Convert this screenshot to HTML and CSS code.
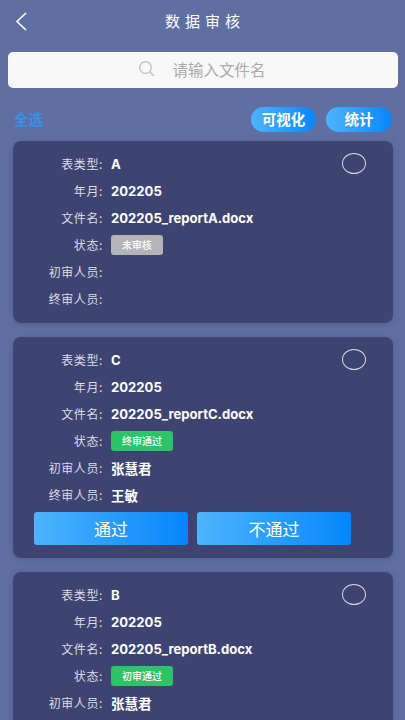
FILE: index.html
```html
<!DOCTYPE html>
<html lang="zh-CN">
<head>
  <meta charset="UTF-8">
  <meta name="viewport" content="width=device-width, initial-scale=1.0">
  <title>数据审核</title>
  <link rel="stylesheet" href="styles.css">
</head>
<body>

<header class="top-bar">
  <svg class="back-icon" width="14" height="20" viewBox="0 0 14 20">
    <path d="M12 2 L3 10.5 L12 19" fill="none" stroke="#fff" stroke-width="1.6"/>
  </svg>
  <h1>数据审核</h1>
</header>

<div class="search-box">
  <svg class="search-icon" width="18" height="18" viewBox="0 0 18 18">
    <circle cx="7.5" cy="7.5" r="5.8" fill="none" stroke="#bdbdbd" stroke-width="1.3"/>
    <path d="M12 12 L16 16" stroke="#bdbdbd" stroke-width="1.3"/>
  </svg>
  <span>请输入文件名</span>
</div>

<div class="toolbar">
  <span class="select-all">全选</span>
  <div class="pills">
    <button class="pill pill-wide">可视化</button>
    <button class="pill">统计</button>
  </div>
</div>

<div class="card">
  <div class="radio"></div>
  <div class="row"><label>表类型:</label><b>A</b></div>
  <div class="row"><label>年月:</label><b>202205</b></div>
  <div class="row"><label>文件名:</label><b>202205_reportA.docx</b></div>
  <div class="row"><label>状态:</label><span class="badge grey">未审核</span></div>
  <div class="row"><label>初审人员:</label></div>
  <div class="row"><label>终审人员:</label></div>
</div>

<div class="card">
  <div class="radio"></div>
  <div class="row"><label>表类型:</label><b>C</b></div>
  <div class="row"><label>年月:</label><b>202205</b></div>
  <div class="row"><label>文件名:</label><b>202205_reportC.docx</b></div>
  <div class="row"><label>状态:</label><span class="badge green">终审通过</span></div>
  <div class="row"><label>初审人员:</label><b class="name">张慧君</b></div>
  <div class="row"><label>终审人员:</label><b class="name">王敏</b></div>
  <div class="actions">
    <button>通过</button>
    <button>不通过</button>
  </div>
</div>

<div class="card">
  <div class="radio"></div>
  <div class="row"><label>表类型:</label><b>B</b></div>
  <div class="row"><label>年月:</label><b>202205</b></div>
  <div class="row"><label>文件名:</label><b>202205_reportB.docx</b></div>
  <div class="row"><label>状态:</label><span class="badge green">初审通过</span></div>
  <div class="row"><label>初审人员:</label><b class="name">张慧君</b></div>
</div>

</body>
</html>
```

FILE: styles.css
```css
* {
  margin: 0;
  padding: 0;
  box-sizing: border-box;
  font-family: "Noto Sans CJK SC", sans-serif;
}

html, body {
  height: 720px;
  overflow: hidden;
}

body {
  background: #5f6fa1;
  color: #fff;
}

.top-bar {
  height: 42px;
  padding: 11px 0 0 14px;
  position: relative;
}

.back-icon {
  display: block;
}

.top-bar h1 {
  position: absolute;
  top: 10px;
  left: 0;
  right: 0;
  text-align: center;
  font-size: 15px;
  line-height: 22px;
  font-weight: 400;
  letter-spacing: 5px;
  text-indent: 5px;
}

.search-box {
  margin: 10px 7px 0 8px;
  height: 36px;
  padding: 0 2px 2px 0;
  background: #f8f8f8;
  border-radius: 5px;
  display: flex;
  align-items: center;
  justify-content: center;
  gap: 16px;
  color: #a9a9a9;
  font-size: 15.5px;
}

.toolbar {
  margin-top: 18px;
  height: 26px;
  padding: 0 13px 0 14px;
  display: flex;
  align-items: center;
  justify-content: space-between;
}

.select-all {
  margin-top: -2px;
  color: #3094ec;
  font-size: 14.5px;
  font-weight: 700;
}

.pills {
  display: flex;
  gap: 10px;
}

.pill {
  width: 66px;
  height: 25px;
  padding-bottom: 2px;
  border: none;
  border-radius: 13px;
  background: linear-gradient(to right, #4db4fd, #0a86fb);
  color: #fff;
  font-size: 14.5px;
  font-weight: 700;
}

.pill-wide {
  width: 65px;
}

.card {
  position: relative;
  margin: 9px 12px 14px 13px;
  padding: 9px 0 11px;
  background: #3e4472;
  border-radius: 8px;
  box-shadow: 0 1px 6px rgba(50, 60, 110, 0.3);
}

.card + .card {
  margin-top: 14px;
}

.radio {
  position: absolute;
  top: 12px;
  right: 27px;
  width: 24px;
  height: 21px;
  border: 1px solid #d8d8e2;
  border-radius: 50%;
}

.row {
  height: 27px;
  display: flex;
  align-items: center;
  font-size: 12px;
}

.row label {
  width: 90px;
  text-align: right;
  color: #dcdde6;
  letter-spacing: 0.6px;
}

.row b {
  margin-left: 8px;
  font-family: "Inter", "Noto Sans CJK SC", sans-serif;
  font-size: 13.1px;
  font-weight: 700;
}

.row b.name {
  font-size: 13.5px;
}

.badge {
  margin-left: 8px;
  height: 20px;
  padding: 0 11px;
  border-radius: 3px;
  font-size: 10px;
  font-weight: 500;
  line-height: 20px;
}

.grey { background: #b4b4b8; }
.green { background: #2bc467; }

.actions {
  display: flex;
  gap: 9px;
  padding-left: 21px;
  margin: 4px 0 2px;
}

.actions button {
  width: 154px;
  height: 33px;
  border: none;
  border-radius: 3px;
  background: linear-gradient(to right, #4db4fd, #0686fb);
  color: #fff;
  font-size: 17px;
}
```
